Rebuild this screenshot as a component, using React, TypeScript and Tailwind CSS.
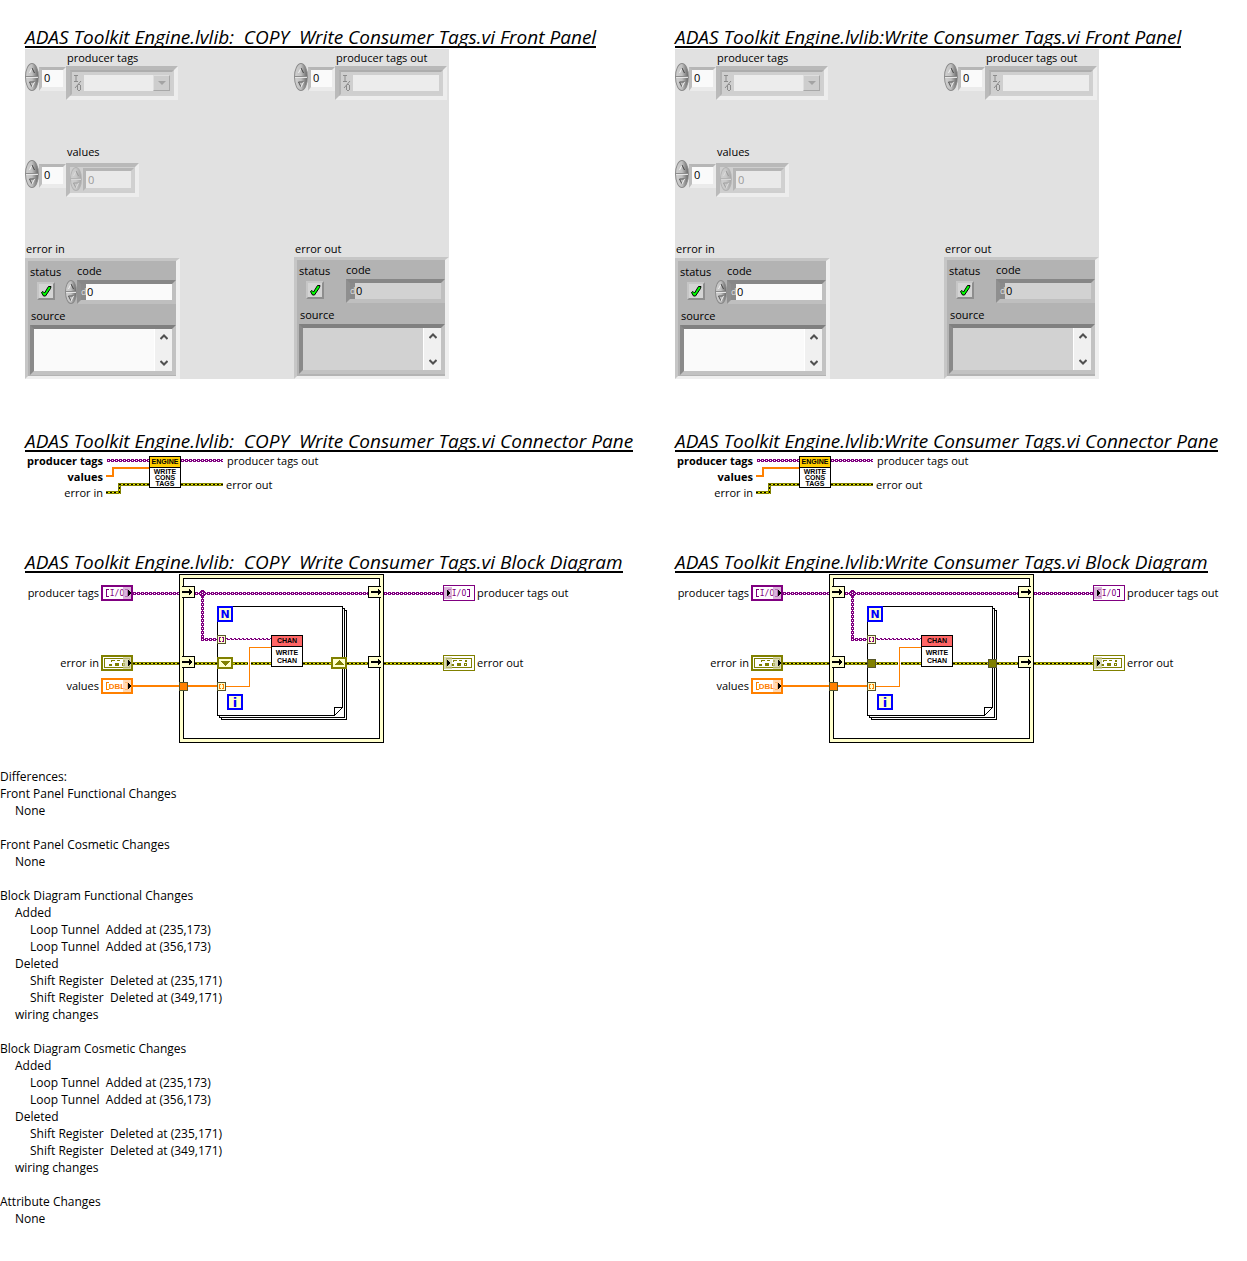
import { useId } from "react";

type Variant = "copy" | "original";

const PURPLE = "#800080";
const OLIVE = "#808000";
const ORANGE = "#ff8000";
const CREAM = "#ffffcc";

/* ---------- shared ---------- */

function Heading({ children }: { children: string }) {
  return (
    <h2 className="h-[22px] w-fit whitespace-pre border-b-2 border-black font-['Open_Sans',sans-serif] text-[19px] leading-[22px] italic">
      {children}
    </h2>
  );
}

/* ---------- front panel ---------- */

function Spinner({ name, small = false, faded = false }: { name: string; small?: boolean; faded?: boolean }) {
  const size = small ? "h-[24px] w-[12px]" : "h-[28px] w-[14px]";
  return (
    <span
      className={`${size} ${faded ? "opacity-40" : ""} flex shrink-0 flex-col overflow-hidden rounded-[50%] border border-[#8a8a8a] bg-linear-to-r from-[#d0d0d0] via-[#c0c0c0] to-[#6c6c6c]`}
    >
      <button type="button" aria-label={`Increment ${name}`} className="flex flex-1 items-center justify-center border-b border-[#8c8c8c]">
        <svg width="6" height="7" viewBox="0 0 6 7">
          <path d="M0.5 6 L3 1" fill="none" stroke="#f2f2f2" />
          <path d="M3 1 L5.5 6" fill="none" stroke="#444" />
        </svg>
      </button>
      <button type="button" aria-label={`Decrement ${name}`} className="flex flex-1 items-center justify-center border-t border-[#e6e6e6]">
        <svg width="6" height="7" viewBox="0 0 6 7">
          <path d="M5.500 1 H0.5 L3 6" fill="none" stroke="#555" />
          <path d="M3 6 L5.500 1" stroke="#f2f2f2" />
        </svg>
      </button>
    </span>
  );
}

function IndexBox({ name }: { name: string }) {
  return (
    <>
      <Spinner name={`${name} index`} />
      <input
        aria-label={`${name} index`}
        defaultValue="0"
        className="mt-[4px] h-[24px] w-[27px] border-[3px] border-b-4 border-t-[#b6b6b6] border-r-[#ebebeb] border-b-[#ebebeb] border-l-[#bdbdbd] bg-[#fafafa] pb-[2px] pl-[2px] text-[11px] leading-[15px] outline-none"
      />
    </>
  );
}

const FRAME =
  "mt-[3px] flex h-[34px] border-[4px] border-t-[#b9b9b9] border-r-[#ededed] border-b-[#ededed] border-l-[#bababa] bg-[#cfcfcf]";
const INNER = "flex min-w-0 flex-1 border-[2px] border-t-[#adadad] border-r-[#d0d0d0] border-b-[#d0d0d0] border-l-[#b2b2b2]";

function IoGlyph() {
  return (
    <svg width="10" height="18" viewBox="0 0 10 18" className="mt-px shrink-0" fill="none" stroke="#8c8c8c">
      <path d="M0 0.500H4M2 1V6M0 6.500H4" />
      <path d="M1 13L7 6" />
      <path d="M4 9.500H6M4 15.500H6M3.500 10V15M6.500 10V15" />
    </svg>
  );
}

function TagArray({ label, indicator = false }: { label: string; indicator?: boolean }) {
  const id = useId();
  return (
    <div>
      <label htmlFor={id} className="block h-[17px] pl-[42px] leading-[18px]">
        {label}
      </label>
      <div className="-mt-[3px] flex">
        <IndexBox name={label} />
        <div className={`${FRAME} w-[112px]`}>
          <div className={`${INNER} p-[2px]`}>
            <IoGlyph />
            {indicator ? (
              <input id={id} readOnly className="my-px w-[86px] bg-[#ececec] outline-none" />
            ) : (
              <div className="relative my-px flex flex-1">
                <select id={id} disabled className="w-full appearance-none bg-[#ececec] opacity-100">
                  <option></option>
                </select>
                <span className="pointer-events-none absolute inset-y-0 right-0 flex w-[17px] items-center justify-center border border-t-[#dedede] border-r-[#a8a8a8] border-b-[#a8a8a8] border-l-[#dedede] bg-[#cdcdcd]">
                  <svg width="8" height="4" viewBox="0 0 8 4">
                    <path d="M0 0H8L4 4Z" fill="#a3a3a3" />
                  </svg>
                </span>
              </div>
            )}
          </div>
        </div>
      </div>
    </div>
  );
}

function ValueArray() {
  const id = useId();
  return (
    <div className="mt-[41px]">
      <label htmlFor={id} className="block h-[22px] pl-[42px] leading-[22px]">
        values
      </label>
      <div className="-mt-[3px] flex">
        <IndexBox name="values" />
        <div className={`${FRAME} w-[73px]`}>
          <Spinner name="values" small faded />
          <input
            id={id}
            defaultValue="0"
            disabled
            className="my-px ml-px h-[23px] w-[51px] border-[3px] border-t-[#b5b5b5] border-r-[#d0d0d0] border-b-[#d0d0d0] border-l-[#b5b5b5] bg-[#e9e9e9] pl-[2px] text-[11px] text-[#9a9a9a]"
          />
        </div>
      </div>
    </div>
  );
}

function Status({ id }: { id: string }) {
  return (
    <span className="relative mt-[2px] ml-[7px] flex h-[18px] w-[18px] border-2 border-t-[#c6c6c6] border-r-[#8e8e8e] border-b-[#8e8e8e] border-l-[#c6c6c6] bg-[#d4d4d4]">
      <input id={id} type="checkbox" defaultChecked className="absolute inset-0 appearance-none" />
      <svg width="14" height="14" viewBox="0 0 14 14" className="pointer-events-none">
        <path d="M2.500 8.500L4 7.500L5.500 9L9.500 2.500H12L11.500 4.500L6.500 12H4.500Z" fill="#00ff00" stroke="#000" strokeWidth="1" />
      </svg>
    </span>
  );
}

function Chevron({ up = false }: { up?: boolean }) {
  return (
    <svg width="8" height="6" viewBox="0 0 8 6" fill="none" stroke="#505050" strokeWidth="2">
      <path d={up ? "M0.500 5L4 1.500L7.500 5" : "M0.500 1L4 4.500L7.500 1"} />
    </svg>
  );
}

function ErrorCluster({ label, indicator = false }: { label: string; indicator?: boolean }) {
  const id = useId();
  const fill = indicator ? "bg-[#d2d2d2]" : "bg-[#fafafa]";
  return (
    <div role="group" aria-labelledby={`${id}g`} className={indicator ? "mt-[140px]" : "mt-[43px] w-[155px]"}>
      <div id={`${id}g`} className={`${indicator ? "h-[17px]" : "h-[18px]"} pl-px leading-[18px]`}>
        {label}
      </div>
      <div
        className={`${indicator ? "pb-[2px]" : "pb-px"} border-3 border-r-4 border-t-[#c6c6c6] border-r-[#efefef] border-b-[#efefef] border-l-[#c6c6c6] bg-[#b3b3b3]`}
      >
        <div className="flex">
          <div className="w-[37px] shrink-0 pl-[2px]">
            <label htmlFor={`${id}s`} className="block h-[19px] leading-[21px]">
              status
            </label>
            <Status id={`${id}s`} />
          </div>
          <div className="min-w-0 flex-1">
            <label htmlFor={`${id}c`} className="block h-[19px] pl-[12px] leading-[20px]">
              code
            </label>
            <div className="flex">
              {indicator ? <span className="w-[12px] shrink-0" /> : <Spinner name="code" small />}
              <div className="flex h-[24px] min-w-0 flex-1 border-4 border-t-[#878787] border-r-[#bfbfbf] border-b-[#bfbfbf] border-l-[#8f8f8f]">
                <span className="w-[5px] bg-[#8a8a8a] text-[9px] leading-[16px] text-[#dcdcdc]">d</span>
                <input
                  id={`${id}c`}
                  defaultValue="0"
                  readOnly={indicator}
                  className={`${fill} w-0 min-w-0 flex-1 pl-px text-[11px] outline-none`}
                />
              </div>
            </div>
          </div>
        </div>
        <label htmlFor={`${id}t`} className="block h-[21px] pt-[2px] pl-[3px] leading-[20px]">
          source
        </label>
        <div className="ml-[2px] flex h-[50px] border-4 border-t-[#808080] border-r-[#c2c2c2] border-b-[#c2c2c2] border-l-[#8a8a8a]">
          <textarea
            id={`${id}t`}
            readOnly={indicator}
            className={`${fill} block w-0 min-w-0 flex-1 resize-none overflow-hidden outline-none`}
          />
          <div className="flex w-[18px] shrink-0 flex-col items-center justify-between border-l border-white bg-[#f0f0f0] py-[5px]">
            <button type="button" aria-label="Scroll up" className="leading-none">
              <Chevron up />
            </button>
            <button type="button" aria-label="Scroll down" className="leading-none">
              <Chevron />
            </button>
          </div>
        </div>
      </div>
    </div>
  );
}

function FrontPanel() {
  return (
    <div className="relative mt-px flex w-fit bg-[#e1e1e1]">
      <div className="flex w-[269px] flex-col">
        <TagArray label="producer tags" />
        <ValueArray />
        <ErrorCluster label="error in" />
      </div>
      <div className="flex w-[155px] flex-col">
        <TagArray label="producer tags out" indicator />
        <ErrorCluster label="error out" indicator />
      </div>
    </div>
  );
}

/* ---------- wires ---------- */

function WirePatterns({ id }: { id: string }) {
  return (
    <defs>
      <pattern id={`${id}chain`} width="4" height="3" patternUnits="userSpaceOnUse">
        <rect width="3" height="3" fill={PURPLE} />
        <rect x="3" y="1" width="1" height="1" fill={PURPLE} />
        <rect x="1" y="1" width="1" height="1" fill="#fff" />
      </pattern>
      <pattern id={`${id}err`} width="4" height="3" patternUnits="userSpaceOnUse">
        <rect width="4" height="3" fill={OLIVE} />
        <rect y="1" width="4" height="1" fill="#e6e600" />
        <rect y="1" width="2" height="1" fill="#000" />
      </pattern>
    </defs>
  );
}

function Wire({ fill, x, y, length, down = false }: { fill: string; x: number; y: number; length: number; down?: boolean }) {
  return (
    <rect
      width={length}
      height="3"
      fill={`url(#${fill})`}
      transform={down ? `translate(${x + 3} ${y}) rotate(90)` : `translate(${x} ${y})`}
    />
  );
}

const LABEL = "font-['Open_Sans',sans-serif] text-[11px]";
const ICON_TEXT = "font-['Liberation_Sans',sans-serif] text-[7px] font-bold";

/* ---------- connector pane ---------- */

function ConnectorPane() {
  const id = useId();
  return (
    <svg width="300" height="48" viewBox="25 453 300 48" className="mt-px block" shapeRendering="crispEdges">
      <WirePatterns id={id} />
      <g className={LABEL}>
        <text x="103" y="465" textAnchor="end" className="font-bold">producer tags</text>
        <text x="103" y="481" textAnchor="end" className="font-bold">values</text>
        <text x="103" y="497" textAnchor="end">error in</text>
        <text x="227" y="465">producer tags out</text>
        <text x="226" y="489">error out</text>
      </g>
      <Wire fill={`${id}chain`} x={107} y={459} length={42} />
      <Wire fill={`${id}chain`} x={181} y={459} length={42} />
      <path d="M106 476H113V468H149" fill="none" stroke={ORANGE} strokeWidth="2" />
      <Wire fill={`${id}err`} x={106} y={491} length={14} />
      <Wire fill={`${id}err`} x={118} y={483} length={11} down />
      <Wire fill={`${id}err`} x={119} y={483} length={30} />
      <Wire fill={`${id}err`} x={181} y={483} length={42} />
      <rect x="149.500" y="456.500" width="31" height="31" fill="#fff" stroke="#000" />
      <rect x="149.500" y="456.500" width="31" height="11" fill="#ffcc00" stroke="#000" />
      <g className={ICON_TEXT} textAnchor="middle">
        <text x="165" y="464">ENGINE</text>
        <text x="165" y="474">WRITE</text>
        <text x="165" y="480">CONS</text>
        <text x="165" y="486">TAGS</text>
      </g>
    </svg>
  );
}

/* ---------- block diagram ---------- */

function ErrorGlyph({ x, y }: { x: number; y: number }) {
  return (
    <g transform={`translate(${x} ${y})`} fill={OLIVE}>
      <path d="M0.500 0.500H25.500V9.500H0.500Z" fill="none" stroke={OLIVE} />
      <path d="M7 2H11V3H8V4H7ZM13 2H16V3H13ZM19 2H21V4H19ZM5 6H8V8H5ZM11 5H15V8H11Z" />
      <path d="M18.500 5.500H20.500V7.500H18.500Z" fill="none" stroke={OLIVE} />
    </g>
  );
}

function Terminal({ x, y, kind, output = false }: { x: number; y: number; kind: "io" | "dbl" | "error"; output?: boolean }) {
  const color = kind === "io" ? PURPLE : kind === "dbl" ? ORANGE : OLIVE;
  const shadeX = output ? x + 1 : x + 22;
  const arrowX = output ? x + 4 : x + 27;
  const inset = output ? 0.5 : 1;
  const shade = kind === "io" ? "#d9b3d9" : kind === "dbl" ? "#ffd9b3" : "#d9d9b3";
  return (
    <g>
      <rect
        x={x + inset}
        y={y + inset}
        width={32 - 2 * inset}
        height={16 - 2 * inset}
        fill="#fff"
        stroke={color}
        strokeWidth={2 * inset}
      />
      <rect x={shadeX} y={y + 2} width="8" height="12" fill={shade} />
      {kind === "error" ? (
        <ErrorGlyph x={x + 3} y={y + 3} />
      ) : (
        <g fill={color}>
          <path
            d={`M${x + 8} ${y + 4.5}H${x + 5.5}V${y + 11.5}H${x + 8}M${x + 24} ${y + 4.5}H${x + 26.5}V${y + 11.5}H${x + 24}`}
            fill="none"
            stroke={color}
          />
          <text
            x={x + 16}
            y={y + 11}
            textAnchor="middle"
            className={
              kind === "io"
                ? "font-['DejaVu_Sans_Mono',monospace] text-[8px]"
                : "font-['Liberation_Sans',sans-serif] text-[8px] font-bold"
            }
          >
            {kind === "io" ? "I/O" : "DBL"}
          </text>
        </g>
      )}
      <rect x={shadeX} y={y + 2} width="8" height="12" fill={shade} opacity="0.6" />
      <path d={`M${arrowX} ${y + 5}H${arrowX + 1}V${y + 6}H${arrowX + 2}V${y + 7}H${arrowX + 3}V${y + 9}H${arrowX + 2}V${y + 10}H${arrowX + 1}V${y + 11}H${arrowX}Z`} fill="#000" />
    </g>
  );
}

function SequenceTunnel({ side, y }: { side: "left" | "right"; y: number }) {
  const left = side === "left";
  const ax = left ? 182 : 371;
  return (
    <g>
      <rect x={left ? 182 : 368} y={y} width="13" height="12" fill="#000" />
      <rect x={left ? 181 : 369} y={y + 1} width="13" height="10" fill={CREAM} />
      <path
        d={`M${ax} ${y + 5}H${ax + 7}V${y + 3}H${ax + 8}V${y + 4}H${ax + 9}V${y + 5}H${ax + 10}V${y + 7}H${ax + 9}V${y + 8}H${ax + 8}V${y + 9}H${ax + 7}V${y + 7}H${ax}Z`}
        fill="#000"
      />
    </g>
  );
}

function Tunnel({ x, y, fill, brackets }: { x: number; y: number; fill: string; brackets?: string }) {
  return (
    <g>
      <rect x={x + 0.5} y={y + 0.5} width="8" height="8" fill={fill} stroke="#55552b" />
      {brackets && (
        <path
          d={`M${x + 4} ${y + 2.5}H${x + 2.5}V${y + 6.5}H${x + 4}M${x + 5} ${y + 2.5}H${x + 6.5}V${y + 6.5}H${x + 5}`}
          fill="none"
          stroke={brackets}
        />
      )}
    </g>
  );
}

function ShiftRegister({ x, up = false }: { x: number; up?: boolean }) {
  return (
    <g>
      <rect x={x + 1} y="658" width="14" height="10" fill={CREAM} stroke={OLIVE} strokeWidth="2" />
      <path d={up ? `M${x + 3} 665H${x + 13}L${x + 8} 660Z` : `M${x + 3} 661H${x + 13}L${x + 8} 666Z`} fill={OLIVE} />
    </g>
  );
}

function BlockDiagram({ variant }: { variant: Variant }) {
  const id = useId();
  const chain = `${id}chain`;
  const err = `${id}err`;
  return (
    <svg width="560" height="171" viewBox="25 573 560 171" className="block" shapeRendering="crispEdges">
      <WirePatterns id={id} />

      <g className={LABEL}>
        <text x="99" y="597" textAnchor="end">producer tags</text>
        <text x="99" y="667" textAnchor="end">error in</text>
        <text x="99" y="690" textAnchor="end">values</text>
        <text x="477" y="597">producer tags out</text>
        <text x="477" y="667">error out</text>
      </g>

      <rect x="179.500" y="574.500" width="204" height="168" fill={CREAM} stroke="#000" />
      <rect x="183.500" y="578.500" width="196" height="160" fill="#fff" stroke="#000" />

      <g fill="#fff" stroke="#000">
        <rect x="221.500" y="610.500" width="125" height="109" />
        <rect x="219.500" y="608.500" width="125" height="109" />
        <path d="M217.500 606.500H342.500V707.500L334.500 715.500H217.500Z" />
        <path d="M334.500 715.500V707.500H342.500" fill="none" />
      </g>

      <Wire fill={chain} x={133} y={592} length={46} />
      <Wire fill={chain} x={195} y={592} length={173} />
      <Wire fill={chain} x={384} y={592} length={59} />
      <Wire fill={chain} x={201} y={595} length={43} down />
      <Wire fill={chain} x={201} y={638} length={16} />
      <path d="M201 590.500H204M200 591.500H205M199.500 592V595M205.500 592V595M200 595.500H205M201 596.500H204" stroke={PURPLE} />
      <path d="M226 638.500H271" stroke={PURPLE} strokeDasharray="2 2" />
      <path d="M227 639.500H271" stroke={PURPLE} strokeDasharray="3 1" />

      <Wire fill={err} x={133} y={662} length={46} />
      <Wire fill={err} x={195} y={662} length={53} />
      <Wire fill={err} x={251} y={662} length={20} />
      <Wire fill={err} x={303} y={662} length={65} />
      <Wire fill={err} x={384} y={662} length={59} />

      <path d="M133 686H217" stroke={ORANGE} strokeWidth="2" />
      <path d="M226 686.500H249.500V647.500H271" fill="none" stroke={ORANGE} />

      <SequenceTunnel side="left" y={586} />
      <SequenceTunnel side="left" y={656} />
      <SequenceTunnel side="right" y={586} />
      <SequenceTunnel side="right" y={656} />

      <Tunnel x={179} y={682} fill={ORANGE} />
      <Tunnel x={217} y={635} fill={CREAM} brackets={PURPLE} />
      <Tunnel x={217} y={682} fill={CREAM} brackets={ORANGE} />
      {variant === "copy" ? (
        <>
          <ShiftRegister x={217} />
          <ShiftRegister x={331} up />
        </>
      ) : (
        <>
          <Tunnel x={217} y={659} fill={OLIVE} />
          <Tunnel x={338} y={659} fill={OLIVE} />
        </>
      )}

      <g fill={CREAM} stroke="#0000ff" strokeWidth="2">
        <rect x="218" y="607" width="14" height="14" />
        <rect x="228" y="695" width="14" height="14" />
      </g>
      <g fill="#0000ff" textAnchor="middle" className="font-['DejaVu_Sans',sans-serif] font-bold">
        <text x="225" y="618" className="text-[11px]">N</text>
        <text x="235" y="707" className="text-[13px]">i</text>
      </g>

      <rect x="271.500" y="635.500" width="31" height="31" fill="#fff" stroke="#000" />
      <rect x="271.500" y="635.500" width="31" height="11" fill="#ff6666" stroke="#000" />
      <g className={ICON_TEXT} textAnchor="middle">
        <text x="287" y="643">CHAN</text>
        <text x="287" y="655">WRITE</text>
        <text x="287" y="663">CHAN</text>
      </g>

      <Terminal x={101} y={585} kind="io" />
      <Terminal x={101} y={655} kind="error" />
      <Terminal x={101} y={678} kind="dbl" />
      <Terminal x={443} y={585} kind="io" output />
      <Terminal x={443} y={655} kind="error" output />
    </svg>
  );
}

/* ---------- report ---------- */

function ViColumn({ name, variant }: { name: string; variant: Variant }) {
  return (
    <section className="min-w-0 pt-[26px] pl-[25px]">
      <Heading>{`${name} Front Panel`}</Heading>
      <FrontPanel />
      <div className="mt-[51px]">
        <Heading>{`${name} Connector Pane`}</Heading>
      </div>
      <ConnectorPane />
      <div className="mt-[50px]">
        <Heading>{`${name} Block Diagram`}</Heading>
      </div>
      <BlockDiagram variant={variant} />
    </section>
  );
}

type Item = { text: string; children?: Item[] };

const diagramChanges: Item[] = [
  { text: "Added", children: [{ text: "Loop Tunnel  Added at (235,173)" }, { text: "Loop Tunnel  Added at (356,173)" }] },
  {
    text: "Deleted",
    children: [{ text: "Shift Register  Deleted at (235,171)" }, { text: "Shift Register  Deleted at (349,171)" }],
  },
  { text: "wiring changes" },
];

const differences: Item[] = [
  { text: "Front Panel Functional Changes", children: [{ text: "None" }] },
  { text: "Front Panel Cosmetic Changes", children: [{ text: "None" }] },
  { text: "Block Diagram Functional Changes", children: diagramChanges },
  { text: "Block Diagram Cosmetic Changes", children: diagramChanges },
  { text: "Attribute Changes", children: [{ text: "None" }] },
];

function Items({ items }: { items: Item[] }) {
  return (
    <ul className="pl-[15px]">
      {items.map((item) => (
        <li key={item.text}>
          {item.text}
          {item.children && <Items items={item.children} />}
        </li>
      ))}
    </ul>
  );
}

export default function App() {
  return (
    <main className="min-h-screen bg-white font-['Open_Sans',sans-serif] text-[11px] text-black">
      <div className="grid grid-cols-[650fr_597fr]">
        <ViColumn name="ADAS Toolkit Engine.lvlib:  COPY  Write Consumer Tags.vi" variant="copy" />
        <ViColumn name="ADAS Toolkit Engine.lvlib:Write Consumer Tags.vi" variant="original" />
      </div>
      <section className="mt-[24px] whitespace-pre text-[12px] leading-[17px]">
        <h3>Differences:</h3>
        <div className="flex flex-col gap-[17px]">
          {differences.map((group) => (
            <div key={group.text}>
              <h4>{group.text}</h4>
              <Items items={group.children ?? []} />
            </div>
          ))}
        </div>
      </section>
    </main>
  );
}
